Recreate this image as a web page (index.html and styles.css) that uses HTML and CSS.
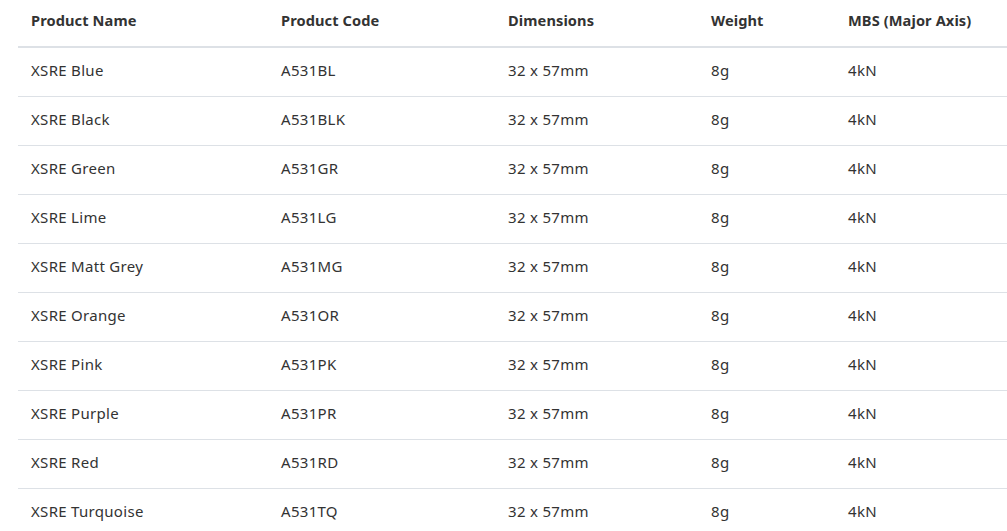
FILE: index.html
```html
<!DOCTYPE html>
<html>
<head>
<meta charset="utf-8">
<link rel="stylesheet" href="styles.css">
</head>
<body>
<table class="spec">
  <colgroup>
    <col class="c1"><col class="c2"><col class="c3"><col class="c4"><col class="c5">
  </colgroup>
  <thead>
    <tr><th>Product Name</th><th>Product Code</th><th>Dimensions</th><th>Weight</th><th>MBS (Major Axis)</th></tr>
  </thead>
  <tbody>
    <tr><td>XSRE Blue</td><td>A531BL</td><td>32 x 57mm</td><td>8g</td><td>4kN</td></tr>
    <tr><td>XSRE Black</td><td>A531BLK</td><td>32 x 57mm</td><td>8g</td><td>4kN</td></tr>
    <tr><td>XSRE Green</td><td>A531GR</td><td>32 x 57mm</td><td>8g</td><td>4kN</td></tr>
    <tr><td>XSRE Lime</td><td>A531LG</td><td>32 x 57mm</td><td>8g</td><td>4kN</td></tr>
    <tr><td>XSRE Matt Grey</td><td>A531MG</td><td>32 x 57mm</td><td>8g</td><td>4kN</td></tr>
    <tr><td>XSRE Orange</td><td>A531OR</td><td>32 x 57mm</td><td>8g</td><td>4kN</td></tr>
    <tr><td>XSRE Pink</td><td>A531PK</td><td>32 x 57mm</td><td>8g</td><td>4kN</td></tr>
    <tr><td>XSRE Purple</td><td>A531PR</td><td>32 x 57mm</td><td>8g</td><td>4kN</td></tr>
    <tr><td>XSRE Red</td><td>A531RD</td><td>32 x 57mm</td><td>8g</td><td>4kN</td></tr>
    <tr><td>XSRE Turquoise</td><td>A531TQ</td><td>32 x 57mm</td><td>8g</td><td>4kN</td></tr>
  </tbody>
</table>
</body>
</html>
```

FILE: styles.css
```css
html, body {
  margin: 0;
  padding: 0;
  background: #ffffff;
  overflow: hidden;
}
body {
  padding-left: 18px;
  font-family: "Noto Sans", "Liberation Sans", sans-serif;
  color: #333333;
}
.spec {
  border-collapse: collapse;
  table-layout: fixed;
  width: 1010px;
}
.c1 { width: 250px; }
.c2 { width: 227px; }
.c3 { width: 203px; }
.c4 { width: 137px; }
.c5 { width: 193px; }
.spec th {
  text-align: left;
  font-weight: 700;
  font-size: 14.6px;
  height: 40px;
  padding: 0 0 6px 13px;
  vertical-align: middle;
  border-bottom: 2px solid #dde1e6;
  letter-spacing: 0.1px;
  white-space: nowrap;
}
.spec td {
  font-size: 15px;
  letter-spacing: 0.3px;
  height: 44px;
  padding: 0 0 4px 13px;
  border-bottom: 1px solid #dde1e6;
  vertical-align: middle;
  white-space: nowrap;
}
```
